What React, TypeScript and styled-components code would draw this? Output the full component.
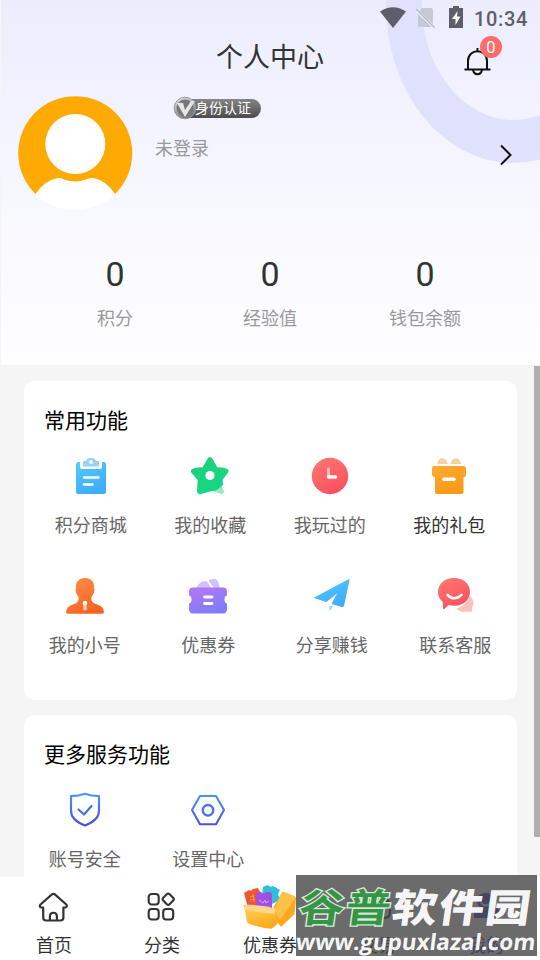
import React from "react";
import styled, { createGlobalStyle } from "styled-components";

const Global = createGlobalStyle`
  * { box-sizing: border-box; }
  body { margin: 0; overflow: hidden; background: #f5f5f5; font-family: Roboto, "Noto Sans CJK SC", sans-serif; }
  svg { display: block; overflow: visible; }
`;

const Screen = styled.div`
  position: relative;
  width: 540px;
  height: 960px;
  overflow: hidden;
  display: flex;
  flex-direction: column;
  background: #f5f5f5;
`;

const Header = styled.header`
  position: relative;
  height: 365px;
  flex: none;
  margin-left: 1px;
  background: linear-gradient(180deg, #ececfd 0, #f1f2fe 25%, #f8f8ff 60%, #fefeff 100%);
`;

const Ring = styled.svg`
  position: absolute;
  left: 0;
  top: 0;
`;

const StatusBar = styled.div`
  position: relative;
  height: 36px;
  display: flex;
  justify-content: flex-end;
  padding: 0 12px 0 0;
`;

const Clock = styled.span`
  font: 500 20px/38px Roboto, sans-serif;
  letter-spacing: 0.65px;
  color: #5d5e68;
  margin-left: 8px;
`;

const TitleBar = styled.div`
  position: relative;
  height: 48px;
  display: grid;
  grid-template-columns: 1fr 120px 1fr;
`;

const Title = styled.h1`
  margin: 0 1px 0 0;
  text-align: center;
  font-size: 27px;
  font-weight: 400;
  line-height: 45px;
  color: #333;
  white-space: nowrap;
`;

const Bell = styled.div`
  position: relative;
  justify-self: end;
  width: 28px;
  height: 28px;
  margin: 12px 48px 0 0;
`;

const Badge = styled.span`
  position: absolute;
  left: 16px;
  top: -12px;
  width: 22px;
  height: 22px;
  border-radius: 50%;
  background: #ff6b6b;
  color: #fff;
  text-align: center;
  font: 16.5px/23px Roboto, sans-serif;
`;

const Profile = styled.section`
  position: relative;
  display: flex;
  height: 126px;
  padding: 12px 28px 0 17px;
`;

const Chevron = styled.svg`
  margin-top: 48px;
`;

const Who = styled.div`
  flex: 1;
  padding-left: 23px;
`;

const Cert = styled.div`
  display: flex;
  align-items: center;
  width: 87px;
  height: 19px;
  margin: 3px 0 0 19px;
  padding-left: 22px;
  border-radius: 10px;
  position: relative;
  background: linear-gradient(180deg, #858585, #4c4c4c);
  color: #fff;
  font-size: 14px;
  line-height: 20px;
  white-space: nowrap;
  svg { position: absolute; left: -1px; top: -3px; }
  span { position: relative; margin-left: -1px; margin-top: -2px; }
`;

const Login = styled.div`
  margin-top: 17px;
  font-size: 18px;
  line-height: 27px;
  color: #999;
`;

const Stats = styled.section`
  position: relative;
  display: grid;
  grid-template-columns: repeat(3, 155px);
  padding: 44px 0 0 36.5px;
`;

const Stat = styled.div`
  text-align: center;
  font-size: 18px;
  line-height: 27px;
  color: #999;
`;

const Value = styled.div`
  font: 34px/41px Roboto, sans-serif;
  color: #333;
  margin-bottom: 10px;
`;

const Card = styled.section<{ $h: number; $top: number }>`
  flex: none;
  width: 493px;
  height: ${(p) => p.$h}px;
  margin: ${(p) => p.$top}px 0 0 24px;
  border-radius: 11px;
  background: #fff;
`;

const CardTitle = styled.h2`
  margin: 0;
  padding: 24px 0 0 20px;
  font-size: 21px;
  font-weight: 400;
  line-height: 32px;
  color: #000;
  height: 75px;
`;

const Row = styled.div<{ $inset?: boolean }>`
  display: grid;
  grid-template-columns: repeat(4, 1fr);
  padding: ${(p) => (p.$inset ? "0 8px 0 7px" : "0")};
  margin-left: ${(p) => (p.$inset ? 0 : -1)}px;
  height: 120px;
`;

const Item = styled.div<{ $dark?: boolean }>`
  display: flex;
  flex-direction: column;
  align-items: center;
  font-size: 18px;
  line-height: 27px;
  white-space: nowrap;
  color: ${(p) => (p.$dark ? "#333" : "#666")};
  svg { margin-bottom: 16px; }
`;

const Scrollbar = styled.div`
  position: absolute;
  right: 0;
  top: 366px;
  width: 6px;
  height: 471px;
  background: #afafaf;
`;

const Nav = styled.nav`
  position: absolute;
  left: 0;
  bottom: 0;
  width: 540px;
  height: 83px;
  display: grid;
  grid-template-columns: repeat(5, 108px);
  background: #fff;
`;

const NavItem = styled.div<{ $active?: boolean }>`
  display: flex;
  flex-direction: column;
  align-items: center;
  font-size: 18px;
  line-height: 27px;
  white-space: nowrap;
  color: ${(p) => (p.$active ? "#4140c8" : "#333")};
`;

const NavIcon = styled.div`
  height: 55px;
  display: flex;
  align-items: center;
  padding-top: 5px;
`;

const Watermark = styled.div`
  position: absolute;
  left: 296px;
  top: 875px;
  width: 241px;
  height: 81px;
  background: rgba(70, 70, 70, 0.8);
  color: rgba(255, 255, 255, 0.96);
  white-space: nowrap;
`;

const Brand = styled.div`
  height: 55px;
  padding-left: 3px;
  font: 900 45px/60px "Noto Sans CJK SC", sans-serif;
  letter-spacing: 1.6px;
  transform: skewX(-8deg) scaleY(0.87);
  transform-origin: 0 36px;
  span {
    font-weight: 700;
    color: #369447;
    -webkit-text-stroke: 3px #d5ecd8;
    paint-order: stroke fill;
  }
`;

const Site = styled.div`
  font: 700 22.5px/24px "Open Sans", sans-serif;
  letter-spacing: 0;
  transform: skewX(-7deg);
`;

const wh = { fill: "none", stroke: "#fff", strokeLinecap: "round" as const };

const DefsSvg = styled.svg`
  position: absolute;
`;

function Defs() {
  const g = (id: string, a: string, b: string) => (
    <linearGradient id={id} x1="0" y1="0" x2=".5" y2="1">
      <stop stopColor={a} /><stop offset="1" stopColor={b} />
    </linearGradient>
  );
  return (
    <DefsSvg width="0" height="0">
      <defs>
        {g("blue", "#56c9ff", "#3fadfc")}
        {g("green", "#21cc75", "#14d886")}
        {g("red", "#ff7970", "#fb5260")}
        {g("gold", "#ffac36", "#f99916")}
        {g("orange", "#ff914a", "#f56423")}
        {g("purple", "#b877f5", "#7f7cf8")}
        {g("silver", "#eeeeee", "#777777")}
        {g("box", "#ffd355", "#ffa91c")}
        <linearGradient id="line" gradientUnits="userSpaceOnUse" x1="0" y1="2" x2="0" y2="36">
          <stop stopColor="#489cf0" /><stop offset="1" stopColor="#514cd9" />
        </linearGradient>
      </defs>
    </DefsSvg>
  );
}

const Icon = ({ children }: { children: React.ReactNode }) => (
  <svg width="40" height="40" viewBox="0 0 40 40">{children}</svg>
);

const icons: Record<string, React.ReactNode> = {
  clipboard: (
    <Icon>
      <path d="M5 8.500q0-2.500 2-2.500h2v5q0 2 2 2h18q2 0 2-2V6h2q2 0 2 2v28q0 2-2 2H7q-2 0-2-2z" fill="url(#blue)" />
      <path d="M12 6q0-1 1-1h2q1-3 3-3h4q2 0 3 3h2q1 0 1 1v4.500H12z" fill="#9bd1f8" />
      <circle cx="20" cy="6" r="2" fill="#fff" />
      <path d="M13 21.500h14.500M13 28.500h8.500" {...wh} strokeWidth="2.500" />
    </Icon>
  ),
  star: (
    <Icon>
      <path d="M30 27l4 8q0 3-3 3-6-2-11-4z" fill="#9be8c0" />
      <path d="M17.700 2.500q2.300-3 4.600 0l5 8.800q9 .1 11 2.700.8 1.500-.5 3L32.500 24l.8 4.500Q28 35 20 35.500L11 38q-3.500.8-4-2.500L7.700 24 1.500 17Q0 15 1.700 13.300q2-1.800 11-2z" fill="url(#green)" />
      <circle cx="20" cy="19.500" r="4.600" fill="#fff" />
    </Icon>
  ),
  clock: (
    <Icon>
      <circle cx="20" cy="20" r="18.200" fill="url(#red)" />
      <path d="M18.500 13v7" {...wh} stroke="#ffc1c1" strokeWidth="2.800" />
      <path d="M18.500 21h7" {...wh} strokeWidth="3.500" />
    </Icon>
  ),
  gift: (
    <Icon>
      <path d="M8.500 8q1-6 5-6 3 0 5.500 6zM21 8q3-6 6-6 4 0 5 6z" fill="#fbd19b" />
      <path d="M5.500 10h29q2.500 0 2.500 2v6q0 3-2.500 3V36q0 2-2 2H8q-2 0-2-2V21q-3 0-3-3v-5.500q0-2.500 2.500-2.500z" fill="url(#gold)" />
      <path d="M15 23.300h10" {...wh} strokeWidth="3.500" />
    </Icon>
  ),
  person: (
    <Icon>
      <path d="M20 2c-6 0-9.500 4-9 9.500-1 3-.2 6 2 8.500 2 4-.5 7-4 8Q1 30.500 1 36q0 1.800 2 1.800h34q2 0 2-1.800 0-5.500-8-8c-3.500-1-6-4-4-8 2-2.500 3-5.500 2-8.500C29.500 6 26 2 20 2z" fill="url(#orange)" />
      <circle cx="20" cy="27" r="2.300" fill="#fff" />
      <path d="M18.200 28.500h3.600v5q-1.800 2-3.600 0z" fill="#ffd0b6" />
    </Icon>
  ),
  coupon: (
    <Icon>
      <path d="M8 12q4-7 9-7 3 0 6 7zM21 5.500q-1-1.500 2-2 5-2 7 2l2 6.500h-6z" fill="#d2c0fa" />
      <path d="M5 11.500h30q4 0 4 4v4q-2.500.5-2.500 4t2.500 4v5q0 5-4 5H5q-4 0-4-5v-5q2.500-.5 2.500-4T1 19.500v-4q0-4 4-4z" fill="url(#purple)" />
      <path d="M16.500 21h7.500M16.500 27.500h7.500" {...wh} strokeWidth="2.800" />
    </Icon>
  ),
  plane: (
    <Icon>
      <path d="M36.500 3.200q1.300-.7 1 1L32 30q-.4 1.500-2 1l-10.500-3L25 17.500 14.500 26 3.500 22.500q-2-.7 0-1.800z" fill="url(#blue)" />
      <path d="M17.500 30h3.800L18 34.500q-.7.500-.7-.5z" fill="#9bd6fb" />
    </Icon>
  ),
  chat: (
    <Icon>
      <path d="M35 20q3.500 3 3.500 8-.5 2.500-1.500 4v4l-4.500-.5q-7 1.500-11-3 9-2 13.500-12.500z" fill="#ffc1bd" />
      <path d="M19 2c9.500 0 16 6 16 13.800 0 8-6.500 14-16 14q-3 0-5.500-.8L9.500 33q-1.200.8-1.500-1l-.4-6.300Q3 22 3 16C3 8 9.500 2 19 2z" fill="url(#red)" />
      <path d="M12.500 18.800q6.500 7 14 0" {...wh} strokeWidth="2.500" />
    </Icon>
  ),
  shield: (
    <Icon>
      <path d="M20 3.800Q13.500 6 6 6.200V21q0 9 14 14.500Q34 30 34 21V6.200Q26.500 6 20 3.800z" fill="none" stroke="url(#line)" strokeWidth="2.200" strokeLinejoin="round" />
      <path d="M13.500 19.500l5.500 5 7.500-8.500" fill="none" stroke="#496fe1" strokeWidth="2.200" strokeLinecap="round" strokeLinejoin="round" />
    </Icon>
  ),
  hex: (
    <Icon>
      <path d="M12 6h16l8 14-8 14.300H12L4 20z" fill="none" stroke="url(#line)" strokeWidth="2.100" strokeLinejoin="round" />
      <circle cx="20" cy="20.200" r="5.200" fill="none" stroke="#4a74e5" strokeWidth="2.500" />
    </Icon>
  ),
};

const Home = () => (
  <svg width="34" height="34" viewBox="0.8 0 34 34" fill="none" stroke="#333" strokeWidth="2.200" strokeLinecap="round" strokeLinejoin="round">
    <path d="M7 17.500H5q-2.500-1-.7-3L16 4.200q1.200-.8 2.400 0L30.100 14.500q1.500 2-.9 3h-2V27.500q0 3-3 3H10q-3 0-3-3z" />
    <path d="M13.700 30v-3.500c0-5 7-5 7 0V30" />
  </svg>
);

const Grid = () => (
  <svg width="34" height="34" viewBox="1.3 0 34 34" fill="none" stroke="#333" strokeWidth="2.100">
    <rect x="5" y="4" width="10" height="10.500" rx="3" />
    <rect x="5" y="19" width="10" height="10.500" rx="3" />
    <rect x="19.500" y="19" width="10" height="10.500" rx="3" />
    <rect x="20" y="4.700" width="9" height="9" rx="2" transform="rotate(45 24.500 9.200)" />
  </svg>
);

const Basket = () => (
  <svg width="54" height="46" viewBox="0 0 54 46">
    <path d="M20 3l5-2q2 3 5 1l7 4-2 4 2 6-12 6-6-10z" fill="#30bfd8" />
    <path d="M1 9l5-3q2 2 4-1l5-1 2 4 3 14-15 2z" fill="#ed5730" />
    <path d="M7 13l4-1m-4 4 5-1m-2-5 1 8" fill="none" stroke="#ff9d75" />
    <path d="M13 10q0-2 3-2h2q3 3 5 0h3q3 0 3 3v16H13z" fill="#a24fe1" />
    <path d="M16 16l4 3 2-3 1 3 3-2" fill="none" stroke="#d8a5ff" />
    <path d="M39.500 7.500L51 12q2 .8 2 3l-1.500 15L39 42q-1 1-2-.5L31 35l-.5-12z" fill="#ffa81e" />
    <path d="M39.500 7.500L51 12q1.800.8 1 2.500L37 36l-6-10z" fill="#ffc247" />
    <path d="M1.500 24L32 28l2.500 12-6 4.700q-13-1-23-5.200-1.500-.5-1.800-2.500z" fill="url(#box)" />
    <path d="M0 20.500q17 0 32.500 4l-1 5.500Q15 28 1.500 25.500z" fill="#ffd78a" />
  </svg>
);

const Trade = () => (
  <svg width="34" height="34" viewBox="0 0 34 34" fill="none" stroke="#333" strokeWidth="2.200">
    <path d="M12 5H9q-4 0-4 4v13q0 6 6 6h12q6 0 6-6v-6M13 12h15l-5-6" />
  </svg>
);

const Mine = () => (
  <svg width="34" height="34" viewBox="0 0 34 34">
    <path d="M8 11q0-8 9-8 8 0 8 8 0 5-3 7h4q4 0 4 4v6H5v-6q0-4 4-4h3q-4-3-4-7z" fill="#4140c8" />
    <path d="M12 13q5 5 10 0" fill="none" stroke="#fff" strokeWidth="2" />
  </svg>
);

export default function App() {
  const item = (icon: string, label: string, dark = false) => (
    <Item $dark={dark}>{icons[icon]}{label}</Item>
  );
  return (
    <Screen>
      <Global />
      <Defs />
      <Header>
        <Ring width="539" height="170" viewBox="1 0 539 170">
          <path fillRule="evenodd" clipRule="evenodd" d="M386 5a127 158 0 0 0 254 0a127 158 0 0 0-254 0zM421.500 3a91.500 117 0 0 0 183 0a91.500 117 0 0 0-183 0z" fill="#dfe1fd" />
          <path d="M386 0h35.500v5H386z" fill="#dfe1fd" />
        </Ring>
        <StatusBar>
          <svg width="86" height="36" viewBox="0 0 86 36">
            <path d="M0 11.500q13-8.500 26 0L13 28z" fill="#5d5e68" />
            <path d="M42 8h9q2 0 2 2v17H38V13z" fill="#c7c8d5" />
            <path d="M35.500 9.500l19 18" stroke="#eeeffd" strokeWidth="3" />
            <path d="M36 9l18.500 18.500" stroke="#b8b9c3" strokeWidth="1.500" />
            <path d="M73 6h6v2h4v20H69V8h4z" fill="#5d5e68" />
            <path d="M77.500 11L72 19h3.500v6l5-8.500H77z" fill="#fff" />
          </svg>
          <Clock>10:34</Clock>
        </StatusBar>
        <TitleBar>
          <span />
          <Title>个人中心</Title>
          <Bell>
            <svg width="28" height="28" viewBox="0.5 0 28 28" fill="none" stroke="#111" strokeWidth="2">
              <path d="M14 0v3M4.500 21.500V13c0-13 19-13 19 0v8.500M1 21.500h26M9.500 22c1 5.500 8 5.500 9 0" />
            </svg>
            <Badge>0</Badge>
          </Bell>
        </TitleBar>
        <Profile>
          <svg width="114" height="114" viewBox="0 0 114 114">
            <path d="M17.500 98A57 57 0 1 1 97 98z" fill="#ffaa03" />
            <circle cx="57.300" cy="48" r="30" fill="#fff" />
            <path d="M17.500 98Q27 84 40 82q4-.5 6 1.500 11 4 22 0 3-2 7-1.500 13 2 22 16a57 57 0 0 1-79.500 0z" fill="#fff" />
          </svg>
          <Who>
            <Cert>
              <svg width="24" height="24" viewBox="0 0 24 24">
                <circle cx="12" cy="12" r="10.800" fill="url(#silver)" stroke="#999" />
                <circle cx="12" cy="12" r="8.500" fill="#777" />
                <path d="M4 7h6l2 7 6-9h4L12 21z" fill="#e7e7e7" />
              </svg>
              <span>身份认证</span>
            </Cert>
            <Login>未登录</Login>
          </Who>
          <Chevron width="12" height="22" viewBox="0 0 12 22">
            <path d="M1 1.500l9.500 9.500L1 20.500" fill="none" stroke="#111" strokeWidth="2" />
          </Chevron>
        </Profile>
        <Stats>
          <Stat><Value>0</Value>积分</Stat>
          <Stat><Value>0</Value>经验值</Stat>
          <Stat><Value>0</Value>钱包余额</Stat>
        </Stats>
      </Header>
      <Card $h={319} $top={16}>
        <CardTitle>常用功能</CardTitle>
        <Row $inset>
          {item("clipboard", "积分商城")}
          {item("star", "我的收藏")}
          {item("clock", "我玩过的")}
          {item("gift", "我的礼包", true)}
        </Row>
        <Row>
          {item("person", "我的小号")}
          {item("coupon", "优惠券")}
          {item("plane", "分享赚钱")}
          {item("chat", "联系客服")}
        </Row>
      </Card>
      <Card $h={260} $top={15}>
        <CardTitle>更多服务功能</CardTitle>
        <Row>
          {item("shield", "账号安全")}
          {item("hex", "设置中心")}
        </Row>
      </Card>
      <Scrollbar />
      <Nav>
        <NavItem><NavIcon><Home /></NavIcon>首页</NavItem>
        <NavItem><NavIcon><Grid /></NavIcon>分类</NavItem>
        <NavItem><NavIcon><Basket /></NavIcon>优惠券</NavItem>
        <NavItem><NavIcon><Trade /></NavIcon>交易</NavItem>
        <NavItem $active><NavIcon><Mine /></NavIcon>我的</NavItem>
      </Nav>
      <Watermark>
        <Brand><span>谷普</span>软件园</Brand>
        <Site>www.gupuxlazal.com</Site>
      </Watermark>
    </Screen>
  );
}
